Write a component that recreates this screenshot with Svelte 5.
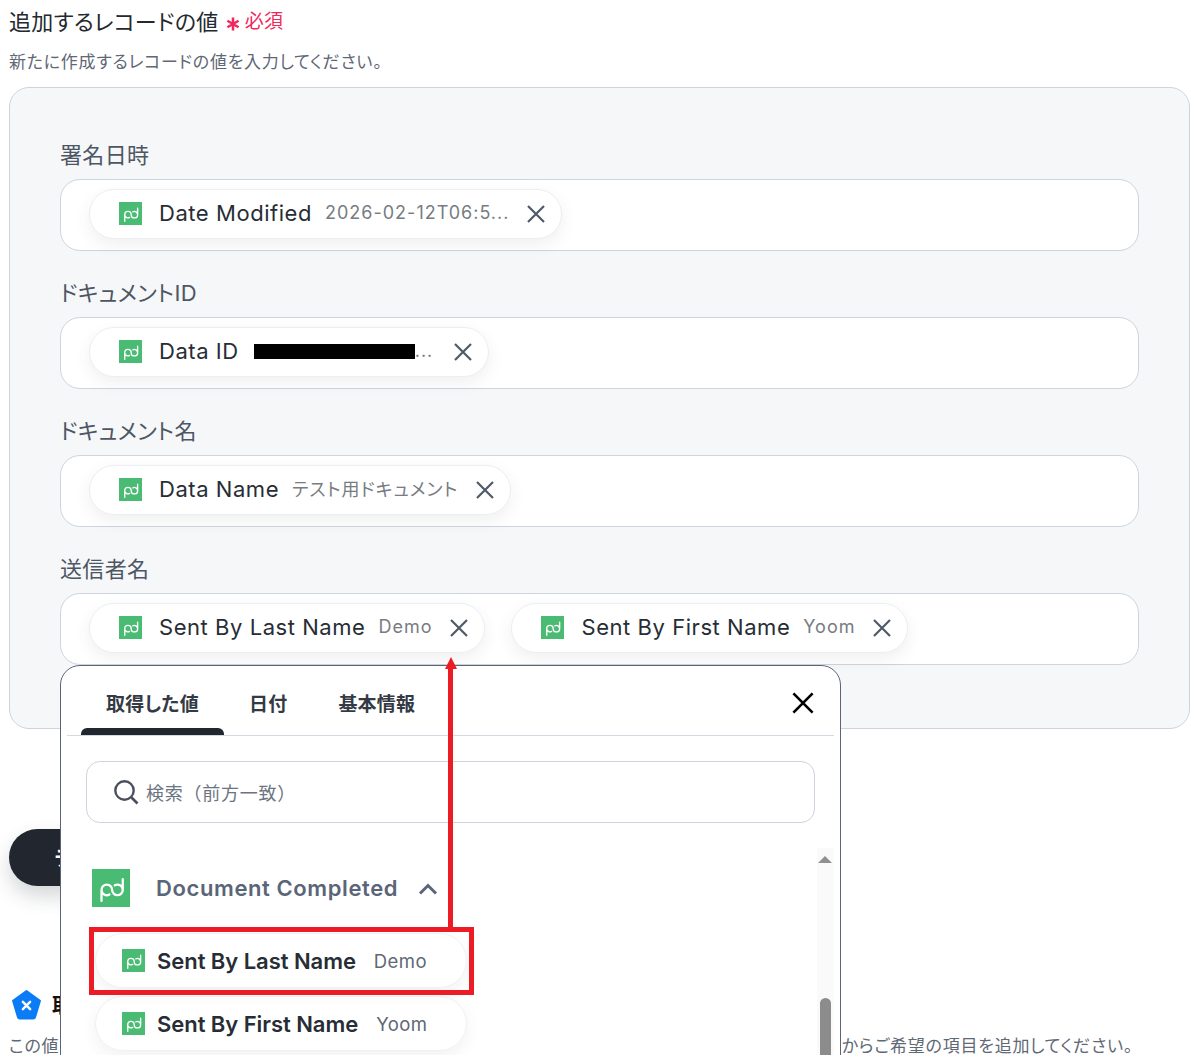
<script>
  const fields = [
    { label: '署名日時', chips: [{ name: 'Date Modified', value: '2026-02-12T06:5...' }] },
    { label: 'ドキュメントID', chips: [{ name: 'Data ID', value: '...', redacted: true }] },
    { label: 'ドキュメント名', chips: [{ name: 'Data Name', value: 'テスト用ドキュメント' }] },
    { label: '送信者名', chips: [{ name: 'Sent By Last Name', value: 'Demo' }, { name: 'Sent By First Name', value: 'Yoom' }] }
  ];
  const options = [
    { name: 'Sent By Last Name', value: 'Demo' },
    { name: 'Sent By First Name', value: 'Yoom' }
  ];
</script>

{#snippet pd(cls)}
  <svg class={cls} viewBox="0 0 100 100" aria-hidden="true">
    <rect width="100" height="100" fill="#4abb73" />
    <path d="M25 84V55A14 14 0 0 1 53 55A14 14 0 0 0 81 55V27M25 55A14 14 0 0 0 46 67M81 55A14 14 0 0 0 60 43" fill="none" stroke="#fff" stroke-width="6" stroke-linecap="round" />
  </svg>
{/snippet}

{#snippet cross(cls)}
  <svg class={cls} viewBox="0 0 20 20" aria-hidden="true">
    <path d="M2 2L18 18M18 2L2 18" fill="none" stroke="currentColor" stroke-width="2.2" />
  </svg>
{/snippet}

<div class="page">
  <h2 class="title">
    <span>追加するレコードの値</span>
    <svg class="star" viewBox="0 0 14 14" aria-hidden="true">
      <path d="M7 0.5V13.5M1.4 3.75L12.6 10.25M12.6 3.75L1.4 10.25" stroke="#f0295c" stroke-width="2.5" />
    </svg>
    <span class="req">必須</span>
  </h2>
  <p class="sub">新たに作成するレコードの値を入力してください。</p>

  <section class="panel">
    {#each fields as f}
      <div class="label">{f.label}</div>
      <div class="field">
        {#each f.chips as c}
          <div class="chip">
            {@render pd('chip-icon')}
            <span class="chip-name">{c.name}</span>
            {#if c.redacted}<span class="redact"></span>{/if}
            <span class="chip-value" class:tight={c.redacted}>{c.value}</span>
            {@render cross('chip-x')}
          </div>
        {/each}
      </div>
    {/each}
  </section>

  <button class="test">テスト</button>

  <div class="note-head">
    <svg class="penta" viewBox="0 0 30 30" aria-hidden="true">
      <path d="M15 2L28 11.4L23.3 27a2 2 0 0 1-2 1.5H8.7a2 2 0 0 1-2-1.5L2 11.4Z" fill="#0a7cf5" stroke="#0a7cf5" stroke-linejoin="round" stroke-width="2" />
      <path d="M11.5 12.5L18.5 19.5M18.5 12.5L11.5 19.5" stroke="#fff" stroke-width="2.4" stroke-linecap="round" />
    </svg>
    <span>取得</span>
  </div>
  <p class="note"><span>この値</span><span>からご希望の項目を追加してください。</span></p>

  <div class="popup">
    <div class="tabs">
      <div class="tab active">取得した値</div>
      <div class="tab">日付</div>
      <div class="tab">基本情報</div>
      {@render cross('pop-x')}
    </div>
    <div class="search">
      <svg class="lens" viewBox="0 0 26 26" aria-hidden="true">
        <circle cx="11.5" cy="11.5" r="9.2" fill="none" stroke="#47505c" stroke-width="2.4" />
        <path d="M18.5 18.5L24.5 24.5" stroke="#47505c" stroke-width="2.6" />
      </svg>
      <span>検索（前方一致）</span>
    </div>
    <div class="list">
      <div class="group">
        {@render pd('group-icon')}
        <span class="group-name">Document Completed</span>
        <svg class="chev" viewBox="0 0 20 12" aria-hidden="true">
          <path d="M2 10.5L10 2.5L18 10.5" fill="none" stroke="#5a6577" stroke-width="3" />
        </svg>
      </div>
      {#each options as o}
        <div class="option">
          {@render pd('opt-icon')}
          <span class="opt-name">{o.name}</span>
          <span class="opt-value">{o.value}</span>
        </div>
      {/each}
      <div class="track"><span class="tri"></span><span class="thumb"></span></div>
    </div>
  </div>

  <div class="arrow"></div>
  <div class="redbox"></div>
</div>

<style>
  :global(body) { margin: 0; background: #fff; }
  .page {
    position: relative;
    height: 1055px;
    overflow: hidden;
    padding: 0 7px 0 9px;
    box-sizing: border-box;
    font-family: Inter, "Noto Sans CJK JP", sans-serif;
    font-feature-settings: "palt";
    color: #24292f;
  }
  .title {
    margin: 0;
    height: 42px;
    padding-bottom: 3px;
    box-sizing: border-box;
    display: flex;
    align-items: center;
    font-size: 22px;
    font-weight: 400;
    letter-spacing: 0.35px;
    white-space: pre;
  }
  :global(.star) { width: 14px; height: 14px; margin: 8px 5px 0 7px; flex: none; }
  .req { color: #f0295c; font-size: 19px; letter-spacing: 0.3px; }
  .sub { margin: 0; height: 45px; padding-top: 8px; box-sizing: border-box; font-size: 17px; line-height: 24px; letter-spacing: 0.75px; color: #5f6875; }
  .panel {
    box-sizing: border-box;
    height: 642px;
    padding: 25px 50px 0;
    background: #f6f7f9;
    border: 1px solid #ced4de;
    border-radius: 20px;
  }
  .label { height: 66px; box-sizing: border-box; padding-bottom: 8px; display: flex; align-items: flex-end; font-size: 22px; line-height: 32px; letter-spacing: 0.35px; color: #4d5663; }
  .field {
    box-sizing: border-box;
    height: 72px;
    display: flex;
    gap: 26.5px;
    padding: 9px 28px;
    background: #fff;
    border: 1px solid #ced4de;
    border-radius: 20px;
  }
  .chip {
    box-sizing: border-box;
    height: 50px;
    display: flex;
    align-items: center;
    padding: 0 15px 2px 29px;
    background: #fff;
    border: 1px solid #eceef2;
    border-radius: 25px;
    box-shadow: 0 6px 16px rgba(60, 70, 90, 0.08);
  }
  :global(.chip-icon) { width: 23px; height: 23px; flex: none; margin-right: 17px; }
  .chip-name { font-size: 22px; letter-spacing: 0.55px; color: #282d35; white-space: nowrap; }
  .chip-value { margin: 0 0 2px 13px; font-size: 18px; letter-spacing: 1px; color: #777c82; white-space: nowrap; }
  .chip-value.tight { margin-left: 0; margin-right: 3px; }
  .redact { width: 161px; height: 15px; margin-left: 15px; background: #000; }
  :global(.chip-x) { width: 20px; height: 20px; margin: 2px 0 0 16.5px; color: #4f5a69; flex: none; }
  .test {
    display: block;
    width: 240px;
    height: 57px;
    margin-top: 100px;
    padding: 0 0 0 45px;
    text-align: left;
    border: 0;
    border-radius: 29px;
    background: #22272f;
    color: #fff;
    font: 700 20px Inter, "Noto Sans CJK JP", sans-serif;
    box-shadow: 0 10px 20px rgba(40, 50, 60, 0.2);
  }
  .note-head { display: flex; align-items: center; height: 32px; margin-top: 102px; font-size: 20px; font-weight: 700; color: #111; }
  :global(.penta) { width: 31px; height: 31px; margin: 0 10px 0 2px; flex: none; }
  .note { display: flex; justify-content: space-between; width: 1124px; margin: 14px 0 0; font-size: 17px; line-height: 24px; letter-spacing: 0.75px; color: #5f6875; white-space: nowrap; }
  .popup {
    position: absolute;
    left: 60px;
    top: 665px;
    box-sizing: border-box;
    width: 781px;
    height: 420px;
    padding: 0 6px;
    background: #fff;
    border: 1px solid #5b6577;
    border-radius: 20px;
  }
  .tabs { position: relative; display: flex; height: 70px; padding-left: 14px; box-sizing: border-box; border-bottom: 1px solid #d4d9e1; }
  .tab { height: 69px; box-sizing: border-box; padding: 26px 26px 0 25px; font-size: 19px; font-weight: 600; line-height: 25px; letter-spacing: 0.2px; color: #333a44; position: relative; }
  .tab.active { width: 143px; padding-left: 25px; padding-right: 0; }
  .tab.active::after { content: ""; position: absolute; left: 0; right: 0; bottom: 0; height: 7px; background: #22272f; border-radius: 6px 6px 0 0; }
  :global(.pop-x) { position: absolute; right: 19px; top: 25px; width: 24px; height: 24px; color: #000; }
  .search {
    display: flex;
    align-items: center;
    box-sizing: border-box;
    height: 62px;
    margin: 25px 19px;
    padding-left: 26px;
    border: 1px solid #ced4de;
    border-radius: 14px;
    font-size: 18px;
    font-feature-settings: normal;
    letter-spacing: 0.75px;
    color: #6b7480;
  }
  :global(.lens) { width: 26px; height: 26px; margin-right: 7px; flex: none; }
  .list { position: relative; }
  .group { display: flex; align-items: center; height: 38px; padding: 21px 0 0 25px; margin-bottom: 26px; }
  :global(.group-icon) { width: 38px; height: 38px; margin-right: 26px; flex: none; }
  .group-name { font-size: 22px; font-weight: 600; letter-spacing: 0.6px; color: #5a6577; }
  :global(.chev) { width: 20px; height: 12px; margin: 2px 0 0 20px; flex: none; }
  .option {
    box-sizing: border-box;
    display: flex;
    align-items: center;
    width: 372px;
    height: 55px;
    margin: 0 0 8px 28px;
    padding-left: 26px;
    border: 1px solid #eef0f3;
    border-radius: 28px;
    box-shadow: 0 6px 16px rgba(60, 70, 90, 0.07);
  }
  :global(.opt-icon) { width: 23px; height: 23px; margin-right: 12px; flex: none; }
  .opt-name { font-size: 22px; font-weight: 600; letter-spacing: -0.05px; color: #282d35; white-space: nowrap; }
  .opt-value { margin-left: 18px; font-size: 18.5px; letter-spacing: 0.4px; color: #5f6875; }
  .track { position: absolute; right: 0; top: 0; width: 17px; height: 260px; background: #fafafa; }
  .tri { position: absolute; left: 1px; top: 8px; border-left: 7px solid transparent; border-right: 7px solid transparent; border-bottom: 7px solid #909090; }
  .thumb { position: absolute; left: 3px; top: 150px; width: 11px; height: 110px; background: #8c8c8c; border-radius: 6px; }
  .arrow { position: absolute; left: 448px; top: 668px; width: 5px; height: 260px; background: #ed1c24; }
  .arrow::before { content: ""; position: absolute; left: -3.5px; top: -11px; border-left: 6px solid transparent; border-right: 6px solid transparent; border-bottom: 12px solid #ed1c24; }
  .redbox { position: absolute; left: 89px; top: 927px; width: 385px; height: 68px; box-sizing: border-box; border: 5px solid #ed1c24; }
</style>
